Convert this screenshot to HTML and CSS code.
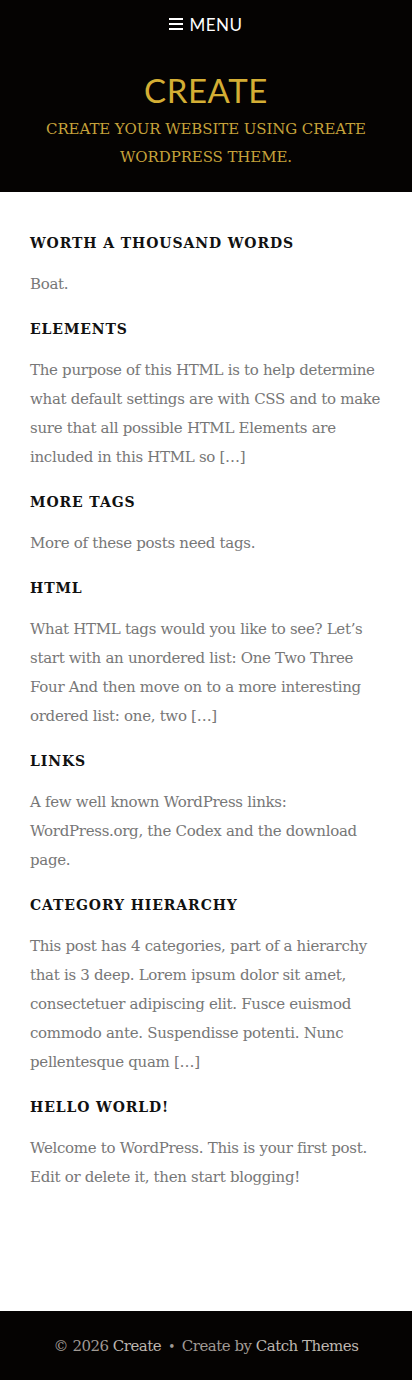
FILE: index.html
```html
<!DOCTYPE html>
<html lang="en">
<head>
<meta charset="utf-8">
<title>Create</title>
<link rel="stylesheet" href="styles.css">
</head>
<body>
<header class="site-header">
  <nav class="menu-bar">
    <button class="menu-toggle" type="button">
      <svg class="menu-icon" width="14" height="12" viewBox="0 0 14 12" aria-hidden="true">
        <rect x="0" y="0" width="14" height="2" fill="#fff"/>
        <rect x="0" y="5" width="14" height="2" fill="#fff"/>
        <rect x="0" y="10" width="14" height="2" fill="#fff"/>
      </svg>
      <span>MENU</span>
    </button>
  </nav>
  <div class="branding">
    <h1 class="site-title">CREATE</h1>
    <p class="site-description">CREATE YOUR WEBSITE USING CREATE WORDPRESS THEME.</p>
  </div>
</header>

<main class="content">
  <article class="post">
    <h2 class="post-title">WORTH A THOUSAND WORDS</h2>
    <p class="post-excerpt">Boat.</p>
  </article>
  <article class="post">
    <h2 class="post-title">ELEMENTS</h2>
    <p class="post-excerpt">The purpose of this HTML is to help determine what default settings are with CSS and to make sure that all possible HTML Elements are included in this HTML so [&hellip;]</p>
  </article>
  <article class="post">
    <h2 class="post-title">MORE TAGS</h2>
    <p class="post-excerpt">More of these posts need tags.</p>
  </article>
  <article class="post">
    <h2 class="post-title">HTML</h2>
    <p class="post-excerpt">What HTML tags would you like to see? Let&rsquo;s start with an unordered list: One Two Three Four And then move on to a more interesting ordered list: one, two [&hellip;]</p>
  </article>
  <article class="post">
    <h2 class="post-title">LINKS</h2>
    <p class="post-excerpt">A few well known WordPress links: WordPress.org, the Codex and the download page.</p>
  </article>
  <article class="post">
    <h2 class="post-title">CATEGORY HIERARCHY</h2>
    <p class="post-excerpt">This post has 4 categories, part of a hierarchy that is 3 deep. Lorem ipsum dolor sit amet, consectetuer adipiscing elit. Fusce euismod commodo ante. Suspendisse potenti. Nunc pellentesque quam [&hellip;]</p>
  </article>
  <article class="post">
    <h2 class="post-title">HELLO WORLD!</h2>
    <p class="post-excerpt">Welcome to WordPress. This is your first post. Edit or delete it, then start blogging!</p>
  </article>
</main>

<footer class="site-footer">
  <p class="site-info">&copy; 2026 <a href="#">Create</a><span class="sep">&bull;</span>Create by <a href="#">Catch Themes</a></p>
</footer>
</body>
</html>
```

FILE: styles.css
```css
* { box-sizing: border-box; }
html, body { margin: 0; padding: 0; }
body {
  background: #fff;
  font-family: "DejaVu Serif", "Liberation Serif", serif;
  color: #777;
  width: 412px;
  min-height: 1380px;
  display: flex;
  flex-direction: column;
}
.site-header {
  background: #050302;
  height: 192px;
  display: flex;
  flex-direction: column;
  align-items: center;
}
.menu-bar {
  height: 48px;
  display: flex;
  align-items: center;
  justify-content: center;
}
.menu-toggle {
  background: none;
  border: 0;
  padding: 0;
  color: #fff;
  font-family: "Lato", "Open Sans", sans-serif;
  font-size: 17px;
  letter-spacing: 0.5px;
  display: flex;
  align-items: center;
  gap: 6px;
}
.branding {
  text-align: center;
  padding: 22px 20px 0;
}
.site-title {
  margin: 0;
  font-family: "Lato", "Open Sans", sans-serif;
  font-weight: 400;
  font-size: 33px;
  line-height: 40px;
  letter-spacing: 0.6px;
  color: #d4ae34;
}
.site-description {
  margin: 5px 0 0;
  font-size: 15px;
  line-height: 28px;
  letter-spacing: -0.1px;
  color: #c5a23a;
  padding: 0 20px;
}
.content {
  padding: 39px 30px 0;
  flex: 1;
}
.post-title {
  margin: 0 0 15px;
  font-size: 14px;
  line-height: 24px;
  font-weight: 700;
  letter-spacing: 0.9px;
  color: #111;
}
.post-excerpt {
  margin: 0 0 18px;
  font-size: 15px;
  line-height: 29px;
  letter-spacing: -0.3px;
  color: #777;
}
.site-footer {
  background: #050302;
  height: 69px;
  display: flex;
  align-items: center;
  justify-content: center;
}
.site-info {
  margin: 0;
  font-size: 15px;
  letter-spacing: -0.5px;
  color: #a09a94;
}
.site-info a { color: #bdb7b0; text-decoration: none; }
.sep { margin: 0 7px; font-size: 12px; }
```
